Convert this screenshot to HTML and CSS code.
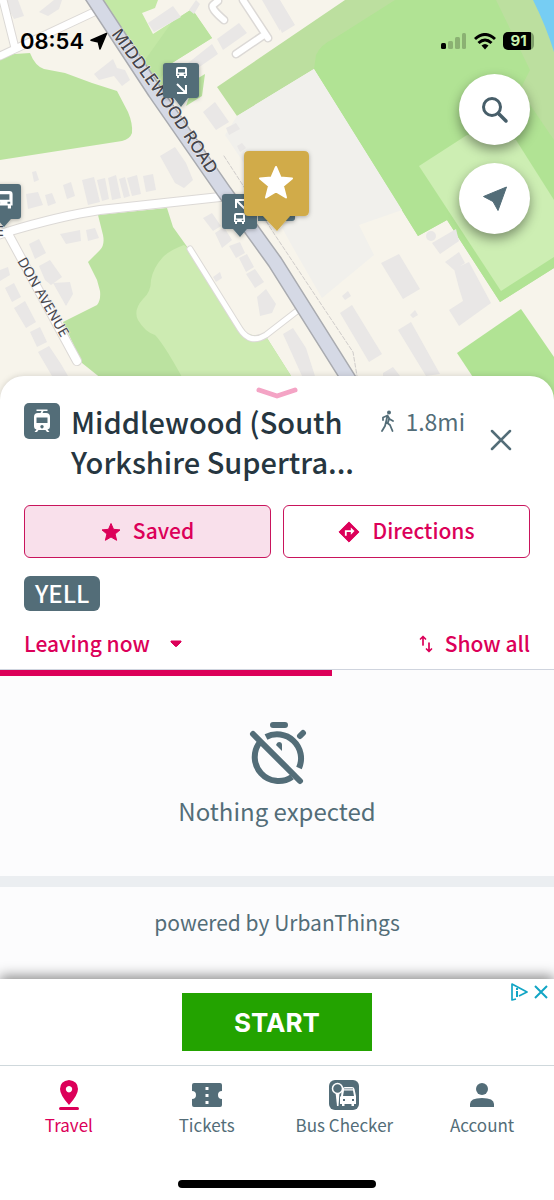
FILE: index.html
```html
<!DOCTYPE html>
<html lang="en">
<head>
<meta charset="utf-8">
<meta name="viewport" content="width=device-width, initial-scale=1">
<title>Middlewood stop</title>
<link rel="stylesheet" href="styles.css">
</head>
<body>
<div class="app">
  <header class="map">
    <svg class="map-canvas" viewBox="0 0 554 400" preserveAspectRatio="xMidYMin slice" role="img" aria-label="Map around Middlewood Road">
      <defs>
        <g id="bus">
          <path fill="#fff" fill-rule="evenodd" d="M2 0H9Q11 0 11 2V9H10V11H8V9H3V11H1V9H0V2Q0 0 2 0ZM2 2V5.5H9V2ZM1.5 6.7V8H3.2V6.7ZM7.8 6.7V8H9.5V6.7Z"/>
        </g>
        <path id="road-label" d="M111 34L160 101L220 192"/>
        <path id="avenue-label" d="M17 261L82 374"/>
        <filter id="pin-shadow" x="-30%" y="-30%" width="160%" height="160%">
          <feDropShadow dx="0" dy="1" stdDeviation="2" flood-color="#000" flood-opacity=".3"/>
        </filter>
      </defs>
      <rect width="554" height="400" fill="#f7f4eb"/>
      <!-- green areas -->
      <path fill="#bbe39f" d="M0 55L30 53Q35 66 44 69L65 73L92 83L117 91L128 112Q133 124 132 133Q130 139 122 141L0 160Z"/>
      <path fill="#c3e8a5" d="M102 0H158L155 8L142 13L153 34L192 9L212 38L172 63L160 95L150 90Z"/>
      <path fill="#bbe39f" d="M172 22L192 9L212 38L172 63L155 85L145 60Z"/>
      <path fill="#bbe39f" d="M195 80L205 74L202 96L186 106Z"/>
      <path fill="#bcdf9f" d="M217 87L345 0H554V268L500 302L447 220L418 236L314 69L237 116Z"/>
      <path fill="#b1e394" d="M316 55Q320 45 335 38L395 0H496L530 70L520 90L554 140V268L500 302L447 220L418 236L314 69Z"/>
      <path fill="#cdeeb3" d="M419 166L467 135L516 140L554 200V257L501 291Z"/>
      <path fill="#b1e394" d="M457 353L521 309L554 357V400H488Z"/>
      <path fill="#76cdf3" d="M533 0H554V52Q546 26 533 0Z"/>
      <path fill="#f1f0ec" d="M237 116L314 69L402 210L359 225L374 255L322 298Q285 235 262 190L225 135Z"/>
      <path fill="#bbe2a0" d="M98 215L167 208L173 227L188 248L242 333L267 338L300 390H115L97 375L82 363L63 322L97 305Q101 300 100 291L97 280L88 262L100 250Q105 245 103 235Z"/>
      <path fill="#cdebb2" d="M184 245Q170 250 163 257Q153 268 151 280Q151 292 143 299Q133 310 138 320Q145 332 155 335Q165 345 189 390H300L267 338L242 333L188 248Z"/>
      <!-- buildings -->
      <g fill="#e9e7e6">
        <path d="M4 0H18L24 16L14 19ZM39 12L54 0H62L59 9L48 16ZM94 74L113 59L117 68L125 70L130 80L122 86L114 76L99 80Z"/>
        <path d="M148 23L173 6L181 17L154 32ZM189 10L196 0L200 4L194 14ZM217 39L239 23L247 33L223 50ZM188 63L212 44L218 54L195 70ZM262 0H280V31ZM280 0L295 25L282 33L276 20Z"/>
        <path d="M203 112L215 102L229 122L216 130ZM226 128L236 123L240 129L229 135ZM237 146L242 143L246 148L240 152Z"/>
        <path d="M160 156L175 147L186 163L193 180L184 188L175 183ZM32 172L36 171L39 180L34 182Z"/>
        <path d="M63 185L71 182L75 196L67 199ZM82 180L94 177L100 202L88 205ZM97 180L105 178L109 199L102 201ZM108 178L116 175L121 198L112 200ZM119 179L125 177L130 196L124 198ZM127 178L137 175L141 194L132 196ZM143 176L153 174L156 190L146 192Z"/>
        <path d="M26 194L38 192L43 205L28 209ZM45 195L52 193L56 203L48 206ZM60 234L80 230L81 241L66 244ZM86 230L95 228L99 238L88 241ZM29 244L39 239L46 253L35 259Z"/>
        <path d="M39 266L50 260L62 277L51 285L45 280ZM53 283L70 282L73 294L66 306ZM5 288L14 283L21 297L12 302ZM14 308L25 301L36 322L26 328ZM30 332L40 327L47 342L37 347ZM38 352L49 346L61 364L68 376H52ZM0 270L8 267L10 275L0 281Z"/>
        <path d="M203 218L212 213L221 226L213 231ZM215 233L224 227L232 240L222 248ZM229 246L240 242L245 253L236 258ZM239 258L247 254L254 267L246 272ZM246 274L255 269L264 282L255 288ZM213 277L220 272L222 278L216 282ZM257 297L266 289L276 304L272 313L260 316Z"/>
        <path d="M381 263L399 254L420 289L403 299ZM432 243L456 229L459 241L440 254ZM445 262L459 252L465 263L454 270ZM454 269L469 262L491 303L459 326L449 310L463 301L459 288Z"/>
        <path d="M340 313L352 305L382 354L369 362ZM398 330L411 322L440 374L426 376ZM283 334L293 328L306 348L315 376H302ZM342 296L348 291L351 296L345 300ZM410 315L415 310L418 315L413 318ZM383 373L393 367L400 376H383Z"/>
        <circle cx="431" cy="236" r="5"/>
      </g>
      <!-- roads -->
      <g fill="none" stroke-linecap="round" stroke-linejoin="round">
        <g stroke="#dcd9d6">
          <path stroke-width="9" d="M0 56L94 12M3 0L15 48"/>
          <path stroke-width="10" d="M-5 236L7 232Q60 216 100 210L220 197M7 232L77 361"/>
          <path stroke-width="7" d="M190 249L240 329Q250 345 266 335L297 311"/>
          <path stroke-width="9" d="M243 0L268 38M236 54L264 35M224 20Q210 8 213 5L218 1"/>
        </g>
        <g stroke="#fff">
          <path stroke-width="7" d="M0 56L94 12M3 0L15 48"/>
          <path stroke-width="8" d="M-5 236L7 232Q60 216 100 210L220 197M7 232L77 361"/>
          <path stroke-width="5" d="M190 249L240 329Q250 345 266 335L297 311"/>
          <path stroke-width="6" d="M243 0L268 38M236 54L264 35M224 20Q210 8 213 5L218 1"/>
        </g>
        <path stroke="#a9abb0" stroke-width="16" d="M88 -10L155 92L223 190L275 262L353 386"/>
        <path stroke="#d5d9e5" stroke-width="13" d="M88 -10L155 92L223 190L275 262L353 386"/>
        <path stroke="#cfccca" stroke-dasharray="4 2" d="M224 156L275 235L353 352L357 376"/>
      </g>
      <g class="map-label" stroke="#f3f2f0" stroke-width="1" paint-order="stroke">
        <text font-size="17"><textPath href="#road-label">MIDDLEWOOD ROAD</textPath></text>
        <text class="minor" font-size="14"><textPath href="#avenue-label">DON AVENUE</textPath></text>
        <text class="minor" x="-4" y="236" font-size="14">E</text>
      </g>
      <!-- stop markers -->
      <g fill="#536d78" filter="url(#pin-shadow)">
        <path d="M166 63H196Q199 63 199 66V95Q199 98 196 98H188L181 107L174 98H166Q163 98 163 95V66Q163 63 166 63Z"/>
        <path d="M225 194H254Q257 194 257 197V226Q257 229 254 229H247L240 237L233 229H225Q222 229 222 226V197Q222 194 225 194Z"/>
        <path d="M-14 184H18Q21 184 21 187V216Q21 219 18 219H11L4 227L-3 219H-14Z"/>
        <path d="M258 195H295V218Q295 221 292 221H258Z"/>
      </g>
      <use href="#bus" transform="translate(176 67)"/>
      <use href="#bus" transform="translate(234 213)"/>
      <use href="#bus" transform="translate(-5 191) scale(1.6)"/>
      <g fill="none" stroke="#fff" stroke-width="2">
        <path d="M177 84L186 93M186 85V93H177M245 209L236 200M236 208V200H244"/>
      </g>
      <path fill="#d1ab48" filter="url(#pin-shadow)" d="M249 151H304Q309 151 309 156V211Q309 216 304 216H290L277 231L263 216H249Q244 216 244 211V156Q244 151 249 151Z"/>
      <path fill="#fff" stroke="#fff" stroke-width="2" stroke-linejoin="round" d="M276 167L280.500 177.500L292 178.500L283 186L286 197.500L276 191.500L266 197.500L269 186L260 178.500L271.500 177.500Z"/>
    </svg>

    <div class="status">
      <div class="status-time">
        <span>08:54</span>
        <svg width="18" height="18" viewBox="0 0 18 18" aria-hidden="true"><path d="M16.500 1.500L10 17L8.300 10L1 8.300Z" stroke="#000" stroke-width="1.500" stroke-linejoin="round"/></svg>
      </div>
      <div class="status-icons">
        <svg width="26" height="18" viewBox="0 0 26 18" aria-hidden="true"><rect y="11" width="5" height="6" rx="1.500"/><g fill="#8bb173"><rect x="7" y="9" width="5" height="8" rx="1.500"/><rect x="14" y="5" width="5" height="12" rx="1.500"/><rect x="21" y="1" width="4" height="16" rx="1.500"/></g></svg>
        <svg width="22" height="17" viewBox="0 0 22 17" aria-hidden="true"><g fill="none" stroke="#000" stroke-width="3"><path d="M1 6Q11 -3 21 6M4.500 10Q11 4 17.500 10"/></g><path d="M7.500 12.500Q11 9.500 14.500 12.500L11 16.500Z"/></svg>
        <span class="battery">91</span>
      </div>
    </div>

    <div class="map-tools">
      <button class="round" type="button" aria-label="Search">
        <svg width="30" height="30" viewBox="0 0 30 30" aria-hidden="true"><g fill="none" stroke="#475e69" stroke-linecap="round"><circle cx="12" cy="12" r="8.500" stroke-width="3"/><path stroke-width="3.500" d="M19 19L26 26"/></g></svg>
      </button>
      <button class="round" type="button" aria-label="My location">
        <svg width="30" height="30" viewBox="0 0 30 30" aria-hidden="true"><path fill="#536d78" stroke="#536d78" stroke-linejoin="round" d="M26.500 3L18 26.500L13 17.500L3.500 12.500Z"/></svg>
      </button>
    </div>
  </header>

  <main class="sheet">
    <button class="handle" type="button" aria-label="Collapse">
      <svg width="44" height="16" viewBox="0 0 44 16" aria-hidden="true"><path fill="none" stroke="#f4a4c5" stroke-width="5" stroke-linecap="round" stroke-linejoin="round" d="M4 5L22 11L40 5"/></svg>
    </button>
    <div class="stop-head">
      <svg class="mode" viewBox="0 0 36 36" aria-hidden="true"><rect width="36" height="36" rx="5" fill="#536d78"/><path fill="#fff" fill-rule="evenodd" d="M12.500 6.500H23.500V8H19.500L18.500 10H22Q26 10 26 14V23Q26 26 23.500 26.500L25.500 29H23L21.500 27H14.500L13 29H10.500L12.500 26.500Q10 26 10 23V14Q10 10 14 10H16.500L17.500 8H12.500ZM12.500 14.500V20H23.500V14.500ZM18 22A1.700 1.700 0 1 0 18.010 22Z"/></svg>
      <h1 class="title">Middlewood (South Yorkshire Supertra...</h1>
      <div class="distance">
        <svg width="16" height="22" viewBox="0 0 16 22" aria-hidden="true"><circle cx="9" cy="2.500" r="2" fill="#536d78"/><path fill="none" stroke="#536d78" stroke-width="1.800" stroke-linecap="round" stroke-linejoin="round" d="M3 10V7.500L7.500 5.500L9.500 9L13 11M7.500 5.500L6 12L10 15L12.500 21M6 12L5 16L2 21M9 9L8 12.500"/></svg>
        <span>1.8mi</span>
      </div>
      <button class="close" type="button" aria-label="Close">
        <svg width="22" height="22" viewBox="0 0 22 22" aria-hidden="true"><path stroke="#536d78" stroke-width="2.500" stroke-linecap="round" d="M2 2L20 20M20 2L2 20"/></svg>
      </button>
    </div>

    <div class="actions">
      <button class="action saved" type="button">
        <svg width="20" height="20" viewBox="0 0 20 20" aria-hidden="true"><path fill="#dc0059" stroke="#dc0059" stroke-linejoin="round" d="M10 1.500L12.500 7.300L19 7.900L14.100 12L15.600 18.300L10 15L4.400 18.300L5.900 12L1 7.900L7.500 7.300Z"/></svg>
        <span class="raised">Saved</span>
      </button>
      <button class="action" type="button">
        <svg width="22" height="22" viewBox="0 0 24 24" aria-hidden="true"><path fill="#dc0059" stroke="#dc0059" stroke-linejoin="round" d="M12 1L23 12L12 23L1 12Z"/><path fill="none" stroke="#fff" stroke-width="2" d="M8.500 16V11H15"/><path fill="#fff" d="M14 7L18 11L14 15Z"/></svg>
        <span class="raised">Directions</span>
      </button>
    </div>

    <div class="tags"><span class="tag">YELL</span></div>

    <div class="filters">
      <button class="link" type="button"><span class="raised">Leaving now</span>
        <svg class="caret" width="12" height="8" viewBox="0 0 12 8" aria-hidden="true"><path fill="#dc0059" stroke="#dc0059" stroke-linejoin="round" d="M1 1H11V2L6.500 6.500H5.500L1 2Z"/></svg>
      </button>
      <button class="link" type="button">
        <svg width="14" height="18" viewBox="0 0 14 18" aria-hidden="true"><path fill="none" stroke="#dc0059" stroke-width="1.700" stroke-linecap="round" stroke-linejoin="round" d="M4 10V2M1.500 4L4 1.500L6.500 4M10 8V16M7.500 14L10 16.500L12.500 14"/></svg>
        <span class="raised">Show all</span>
      </button>
    </div>
    <div class="progress"><div class="progress-fill"></div></div>

    <section class="empty">
      <svg width="60" height="68" viewBox="0 0 60 68" aria-hidden="true">
        <g fill="none" stroke="#536d78" stroke-width="6" stroke-linecap="round"><path d="M26 5H38M53 16L56 13"/><path stroke-linecap="butt" d="M19 17A24 24 0 0 1 52 48M45 57A24 24 0 0 1 13 22"/><path d="M6 14L53 61"/></g>
        <path fill="#536d78" d="M29 25Q30 22 32 22Q35 22 35 25V31Z"/>
      </svg>
      <p class="empty-text">Nothing expected</p>
    </section>
    <p class="powered">powered by UrbanThings</p>
  </main>

  <aside class="ad" aria-label="Advertisement">
    <button class="start" type="button">START</button>
    <div class="ad-marks">
      <svg width="18" height="18" viewBox="0 0 18 18" aria-hidden="true"><path fill="none" stroke="#12a5c5" stroke-width="1.700" stroke-linejoin="round" d="M6 16L2 17V1L17 9L9 13"/><path fill="none" stroke="#12a5c5" stroke-width="2" d="M7 5V7M7 8V14"/></svg>
      <button class="ad-close" type="button" aria-label="Close ad"><svg width="14" height="14" viewBox="0 0 14 14" aria-hidden="true"><path stroke="#12a5c5" stroke-width="2" d="M1 1L13 13M13 1L1 13"/></svg></button>
    </div>
  </aside>

  <nav class="tabs">
    <a class="tab current" href="#travel">
      <svg width="30" height="32" viewBox="0 0 30 32" aria-hidden="true"><path fill="#dc0059" fill-rule="evenodd" d="M15 1Q24 2 24 10Q24 16 15 26Q6 16 6 10Q6 2 15 1ZM15 7A3.200 3.200 0 1 0 15.010 7Z"/><path stroke="#dc0059" stroke-width="3" stroke-linecap="round" d="M6.500 29.500H23.500"/></svg>
      Travel
    </a>
    <a class="tab" href="#tickets">
      <svg width="30" height="32" viewBox="0 0 30 32" aria-hidden="true"><path fill="#536d78" d="M2 4H28Q30 4 30 6V12A4 4 0 0 0 30 20V26Q30 28 28 28H2Q0 28 0 26V20A4 4 0 0 0 0 12V6Q0 4 2 4Z"/><path stroke="#fff" stroke-width="3" stroke-dasharray="3 4" d="M15 8V26"/></svg>
      Tickets
    </a>
    <a class="tab" href="#checker">
      <svg width="30" height="32" viewBox="0 0 30 32" aria-hidden="true"><rect y="1" width="30" height="30" rx="6" fill="#536d78"/><path fill="#fff" fill-rule="evenodd" d="M12 17L13 10Q14 8 16 8H23Q25 8 25.500 10L27 17V25H25V27H22.500V25H15.500V27H13V25H11V18ZM15 11.500L14 17H25L24 11.500ZM15 9.500V10.300H24V9.500ZM14 20V22H16V20ZM23 20V22H25V20Z"/><path fill="#fff" d="M6.500 13H10.500L9.500 27H8Z"/><circle cx="8.500" cy="9.500" r="5" fill="#536d78" stroke="#fff" stroke-width="1.500"/></svg>
      Bus Checker
    </a>
    <a class="tab" href="#account">
      <svg width="30" height="32" viewBox="0 0 30 32" aria-hidden="true"><circle cx="15" cy="10" r="6" fill="#536d78"/><path fill="#536d78" d="M3 28V25Q3 19 15 19Q27 19 27 25V28Z"/></svg>
      Account
    </a>
  </nav>
  <div class="home-bar"></div>
</div>
</body>
</html>
```

FILE: styles.css
```css
* { box-sizing: border-box; }

body {
  margin: 0;
  background: #fff;
  color: #536d78;
  font-family: "Noto Sans CJK SC", "Noto Sans", sans-serif;
}

button {
  margin: 0;
  padding: 0;
  border: 0;
  background: none;
  color: inherit;
  font: inherit;
  cursor: pointer;
}

svg { display: block; flex: none; }
h1, p { margin: 0; }

.app {
  display: flex;
  flex-direction: column;
  min-height: 100vh;
}

/* Map */
.map { position: relative; height: 400px; }
.map-canvas { width: 100%; height: 100%; }
.map-label { font-family: "Noto Sans", sans-serif; font-weight: 500; fill: #45454c; }
.map-label .minor { font-weight: 400; }

.status {
  position: absolute;
  inset: 26px 20px auto 20px;
  display: flex;
  align-items: center;
  justify-content: space-between;
  height: 30px;
  color: #000;
  font-family: Inter, sans-serif;
}
.status-time { display: flex; align-items: center; gap: 6px; font-size: 22px; font-weight: 600; line-height: 24px; }
.status-icons { display: flex; align-items: center; gap: 7px; }
.battery {
  width: 31px;
  border-radius: 5px;
  background: linear-gradient(90deg, #000 28px, #7f9f6b 28px);
  color: #c9f0ae;
  font-size: 15px;
  font-weight: 700;
  line-height: 18px;
  text-align: center;
}

.map-tools {
  position: absolute;
  top: 74px;
  right: 24px;
  display: flex;
  flex-direction: column;
  gap: 18px;
}
.round {
  display: grid;
  place-items: center;
  width: 71px;
  height: 71px;
  border-radius: 50%;
  background: #fff;
  box-shadow: 0 5px 12px rgba(0, 0, 0, .4);
}

/* Stop sheet */
.sheet {
  position: relative;
  display: flex;
  flex-direction: column;
  flex: 1;
  margin-top: -24px;
  border-radius: 24px 24px 0 0;
  background: #fff;
  box-shadow: 0 0 6px rgba(0, 0, 0, .15);
}
.handle { align-self: center; margin-top: 9px; }
.stop-head { display: flex; align-items: flex-start; padding: 0 34px 0 24px; }
.mode { width: 36px; height: 36px; margin: 2px 11px 0 0; }
.title {
  flex: 1;
  color: #263640;
  font-size: 29px;
  font-weight: 500;
  line-height: 40px;
}
.distance { display: flex; align-items: center; gap: 9px; font-size: 23px; line-height: 40px; }
.close { display: grid; place-items: center; width: 38px; height: 38px; margin: 20px 0 0 17px; }

.actions { display: flex; gap: 12px; margin-top: 24px; padding: 0 24px; }
.action {
  display: flex;
  flex: 1;
  align-items: center;
  justify-content: center;
  gap: 12px;
  height: 53px;
  border: 1px solid #c9145c;
  border-radius: 6px;
  color: #dc0059;
  font-size: 21px;
  font-weight: 500;
}
.saved { background: #f9e0eb; }
.raised { padding-bottom: 3px; }

.tags { display: flex; padding: 18px 24px 0; }
.tag {
  padding: 0 11px 2px;
  border-radius: 6px;
  background: #536d78;
  color: #fff;
  font-size: 24px;
  font-weight: 500;
  line-height: 33px;
}
.filters { display: flex; justify-content: space-between; padding: 13px 24px 5px; }
.link {
  display: flex;
  align-items: center;
  gap: 12px;
  height: 40px;
  color: #dc0059;
  font-size: 21px;
  font-weight: 500;
}
.caret { margin-left: 8px; }
.progress { height: 7px; border-top: 1px solid #cfd4de; background: #fcfcfd; }
.progress-fill { width: 60%; height: 6px; background: #dc0059; }

.empty {
  display: flex;
  flex-direction: column;
  align-items: center;
  height: 211px;
  padding-top: 44px;
  border-bottom: 11px solid #ebeef1;
  background: #fcfcfd;
}
.empty-text { margin-top: 3px; font-size: 24px; line-height: 40px; }
.powered {
  flex: 1;
  padding: 15px 24px 37px;
  background: #fcfcfd;
  font-size: 21px;
  line-height: 40px;
  text-align: center;
}

/* Advert */
.ad {
  position: relative;
  display: flex;
  justify-content: center;
  padding: 14px 24px;
  border-bottom: 1px solid #cfd8dc;
  background: #fff;
  box-shadow: 0 -3px 12px rgba(0, 0, 0, .45);
  clip-path: inset(-24px 0 0);
}
.start {
  width: 190px;
  height: 58px;
  background: #23a300;
  color: #fff;
  font-family: Inter, sans-serif;
  font-size: 26px;
  font-weight: 700;
}
.ad-marks { position: absolute; top: 4px; right: 6px; display: flex; align-items: center; gap: 6px; }

/* Tabs */
.tabs { display: flex; padding: 13px 3px 0 0; }
.tab {
  display: flex;
  flex: 1;
  flex-direction: column;
  align-items: center;
  color: #536d78;
  font-size: 17px;
  line-height: 27px;
  text-decoration: none;
}
.current { color: #dc0059; }
.home-bar { width: 198px; height: 8px; margin: 42px auto 12px; border-radius: 4px; background: #000; }
```
